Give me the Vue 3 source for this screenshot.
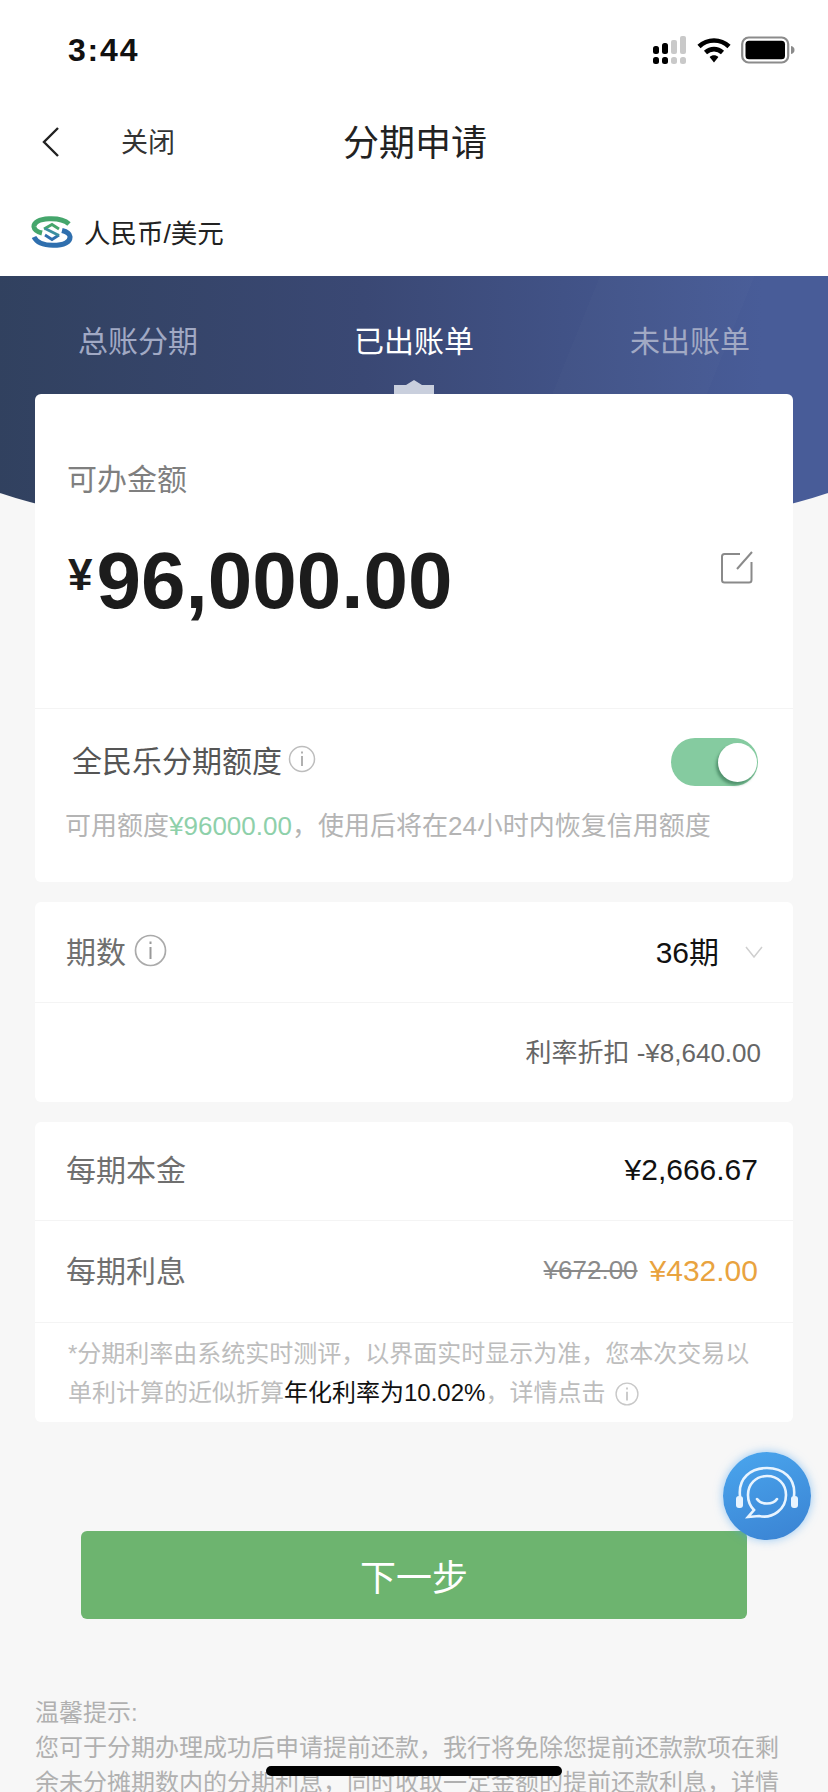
<script setup>
const tabs = [
  { label: '总账分期', active: false },
  { label: '已出账单', active: true },
  { label: '未出账单', active: false },
]
</script>

<template>
  <div class="page">
    <header class="status">
      <span class="time">3:44</span>
      <div class="status-icons">
        <svg width="34" height="28" viewBox="0 0 34 28">
          <g fill="#000">
            <rect x="0" y="10" width="6" height="8" rx="2.5" />
            <rect x="9" y="7" width="6" height="11" rx="2.5" />
            <rect x="0" y="21" width="6" height="7" rx="2.5" />
            <rect x="9" y="21" width="6" height="7" rx="2.5" />
          </g>
          <g fill="#c9c9c9">
            <rect x="18" y="4" width="6" height="14" rx="2" />
            <rect x="27" y="0" width="6" height="18" rx="2" />
            <rect x="18" y="21" width="6" height="7" rx="2.5" />
            <rect x="27" y="21" width="6" height="7" rx="2.5" />
          </g>
        </svg>
        <svg class="wifi" width="34" height="26" viewBox="0 0 34 26">
          <path d="M2 9.5 C10.5 1.5 23.5 1.5 32 9.5" fill="none" stroke="#000" stroke-width="4.6" />
          <path d="M8.5 15.5 C13.5 11 20.5 11 25.5 15.5" fill="none" stroke="#000" stroke-width="4.6" />
          <path d="M12.6 20 C15 17.8 19 17.8 21.4 20 L17 25.5 Z" fill="#000" />
        </svg>
        <svg width="54" height="28" viewBox="0 0 54 28">
          <rect x="1.2" y="1.5" width="46" height="25" rx="6.5" fill="none" stroke="#8b8b8b" stroke-width="2.2" />
          <rect x="4.5" y="4.7" width="39.5" height="18.6" rx="3.5" fill="#000" />
          <path d="M50 10 C52.5 10.5 53.5 12 53.5 14 C53.5 16 52.5 17.5 50 18 Z" fill="#8b8b8b" />
        </svg>
      </div>
    </header>

    <nav class="nav">
      <svg class="back" width="20" height="32" viewBox="0 0 20 32">
        <path d="M17 2 L3 16 L17 30" fill="none" stroke="#222" stroke-width="2.4" />
      </svg>
      <span class="close">关闭</span>
      <h1 class="title">分期申请</h1>
    </nav>

    <div class="currency">
      <svg class="logo" width="42" height="32" viewBox="0 0 42 32">
        <path d="M38 8 C33 3.500 25 2.500 18 2.800 C8 3.200 2.500 6.500 3 11 C3.500 14.500 7 16 11 17" fill="none" stroke="#45a66c" stroke-width="5" />
        <path d="M3 21 C6 27 14 29.300 22 29.300 C33 29.300 39.500 26 39 20.500 C38.600 17 35 15.500 31 14.500" fill="none" stroke="#2f6fae" stroke-width="5" />
        <path d="M13 13 L21 8.500 L28 13" fill="none" stroke="#45a66c" stroke-width="2.800" />
        <path d="M14 19 L21 23.500 L28 19" fill="none" stroke="#2f6fae" stroke-width="2.800" />
        <path d="M14 12.500 L28 19.500" fill="none" stroke="#3b8fa0" stroke-width="2.800" />
      </svg>
      <span class="currency-text">人民币/美元</span>
    </div>

    <section class="hero">
      <div class="tabs">
        <div v-for="tab in tabs" :key="tab.label" class="tab" :class="{ active: tab.active }">
          {{ tab.label }}
          <svg v-if="tab.active" class="pointer" width="40" height="14" viewBox="0 0 40 14">
            <path d="M0 5 L12 5 L20 0 L28 5 L40 5 L40 14 L0 14 Z" fill="#c9cfdd" />
          </svg>
        </div>
      </div>

      <div class="card">
        <div class="amount-block">
          <div class="muted-label">可办金额</div>
          <div class="amount-row">
            <div class="amount"><span class="yen">¥</span>96,000.00</div>
            <svg class="edit" width="34" height="34" viewBox="0 0 34 34">
              <path d="M20 3 L4.500 3 Q2 3 2 5.500 L2 29 Q2 31.500 4.500 31.500 L29 31.500 Q31.500 31.500 31.500 29 L31.500 11" fill="none" stroke="#8a8a8a" stroke-width="2" />
              <path d="M17 18 L32 1" fill="none" stroke="#8a8a8a" stroke-width="2" />
            </svg>
          </div>
        </div>
        <div class="quota-block">
          <div class="quota-row">
            <div class="quota-label">
              <span>全民乐分期额度</span>
              <svg width="28" height="28" viewBox="0 0 28 28">
                <circle cx="14" cy="14" r="12.500" fill="none" stroke="#bdbdbd" stroke-width="1.500" />
                <path d="M14 11 V21 M14 6.500 V8.500" stroke="#a8a8a8" stroke-width="1.800" />
              </svg>
            </div>
            <div class="toggle"><div class="knob"></div></div>
          </div>
          <p class="quota-hint">可用额度<span class="green">¥96000.00</span>，使用后将在24小时内恢复信用额度</p>
        </div>
      </div>
    </section>

    <section class="card panel">
      <div class="row term-row">
        <div class="row-left">
          <span class="row-label">期数</span>
          <svg width="33" height="33" viewBox="0 0 33 33">
            <circle cx="16.500" cy="16.500" r="15" fill="none" stroke="#aaa" stroke-width="1.700" />
            <path d="M16.500 13 V25 M16.500 7.500 V10" stroke="#999" stroke-width="2" />
          </svg>
        </div>
        <div class="row-right">
          <span class="value">36期</span>
          <svg class="chevron" width="18" height="12" viewBox="0 0 18 12">
            <path d="M1 1 L9 11 L17 1" fill="none" stroke="#cfcfcf" stroke-width="1.500" />
          </svg>
        </div>
      </div>
      <div class="row discount-row">利率折扣 -¥8,640.00</div>
    </section>

    <section class="card panel">
      <div class="row money-row">
        <span class="row-label">每期本金</span>
        <span class="value">¥2,666.67</span>
      </div>
      <div class="row money-row tall">
        <span class="row-label">每期利息</span>
        <div class="prices">
          <s class="old-price">¥672.00</s>
          <span class="new-price">¥432.00</span>
        </div>
      </div>
      <div class="note">
        <div class="note-line">*分期利率由系统实时测评，以界面实时显示为准，您本次交易以</div>
        <div class="note-line">单利计算的近似折算<span class="dark">年化利率为10.02%</span>，详情点击
          <svg class="note-info" width="24" height="24" viewBox="0 0 22 22">
            <circle cx="11" cy="11" r="10" fill="none" stroke="#c8c8c8" stroke-width="1.300" />
            <path d="M11 9 V17 M11 5 V6.800" stroke="#c0c0c0" stroke-width="1.500" />
          </svg>
        </div>
      </div>
    </section>

    <button class="next" type="button">下一步</button>

    <section class="tips">
      <div>温馨提示:</div>
      <div>您可于分期办理成功后申请提前还款，我行将免除您提前还款款项在剩余未分摊期数内的分期利息，同时收取一定金额的提前还款利息，详情</div>
    </section>

    <div class="fab">
      <svg width="88" height="88" viewBox="0 0 88 88">
        <g fill="none" stroke="#e8f4ff" stroke-width="2.600" stroke-linecap="round">
          <path d="M17 44 C15 26 28 16 44 16 C60 16 73 26 71 44" />
          <path d="M25 65 L36 64 C50 67 63 57 63 43 C63 32 55 24 44 24 C33 24 25 32 25 43 C25 50 28 55 31 58 Z" />
          <path d="M34 47 C38 53 50 53 54 47" />
        </g>
        <rect x="13" y="44" width="7" height="12" rx="3" fill="#e8f4ff" />
        <rect x="68" y="44" width="7" height="12" rx="3" fill="#e8f4ff" />
      </svg>
    </div>
    <div class="home-indicator"></div>
  </div>
</template>

<style>
html, body { margin: 0; background: #f7f7f7; }
</style>

<style scoped>
.page {
  position: relative;
  width: 828px;
  height: 1792px;
  overflow: hidden;
  background: #f7f7f7;
  font-family: "Liberation Sans", "Noto Sans CJK SC", sans-serif;
  color: #222;
}
.status {
  height: 100px;
  box-sizing: border-box;
  padding: 30px 33px 0 68px;
  display: flex;
  justify-content: space-between;
  align-items: flex-start;
  background: #fff;
}
.time { font-size: 32px; font-weight: 700; line-height: 40px; color: #111; letter-spacing: 1.800px; }
.status-icons { display: flex; align-items: center; gap: 10px; padding-top: 6px; }
.nav {
  position: relative;
  height: 84px;
  background: #fff;
  display: flex;
  align-items: center;
  padding-left: 41px;
}
.back { flex: none; }
.close { margin-left: 60px; padding-bottom: 4px; font-size: 27px; color: #333; }
.title {
  margin: 0 0 0 168px;
  padding-bottom: 4px;
  font-size: 36px;
  font-weight: 400;
  color: #222;
}
.currency {
  height: 92px;
  background: #fff;
  box-sizing: border-box;
  padding: 0 0 0 31px;
  display: flex;
  align-items: center;
  gap: 11px;
  font-size: 26.500px;
  color: #222;
}
.currency-text { padding-top: 2px; }
.logo { flex: none; margin-top: 4px; }
.hero { position: relative; }
.hero::before {
  content: "";
  position: absolute;
  left: -83px;
  top: 0;
  width: 994px;
  height: 267px;
  border-radius: 0 0 497px 497px / 0 0 112px 112px;
  background:
    linear-gradient(112deg, transparent 62%, rgba(255,255,255,.012) 62%, rgba(255,255,255,.012) 76%, transparent 76%),
    linear-gradient(90deg, #31415f 8%, #3a4874 45%, #485c98 85%);
}
.tabs {
  position: relative;
  height: 118px;
  display: grid;
  grid-template-columns: repeat(3, 276px);
}
.tab {
  position: relative;
  padding-top: 44px;
  text-align: center;
  font-size: 30px;
  line-height: 44px;
  color: #a1a9c4;
}
.tab.active { color: #fff; }
.pointer { position: absolute; left: 118px; bottom: 0; }
.card {
  position: relative;
  margin: 0 35px;
  background: #fff;
  border-radius: 6px;
}
.amount-block {
  height: 314px;
  box-sizing: border-box;
  padding: 64px 39px 0 33px;
}
.muted-label { font-size: 30px; line-height: 44px; color: #7f7f7f; margin-left: -1px; }
.amount-row {
  margin-top: 23px;
  display: flex;
  justify-content: space-between;
  align-items: flex-start;
}
.amount {
  font-size: 80px;
  font-weight: 700;
  line-height: 100px;
  color: #1c1c1c;
  letter-spacing: 0;
}
.yen { font-size: 44px; vertical-align: 18px; margin-right: 4px; }
.edit { margin-top: 26px; }
.quota-block {
  height: 174px;
  box-sizing: border-box;
  border-top: 1px solid #f4f4f4;
  padding: 28px 35px 0 32px;
}
.quota-row { display: flex; justify-content: space-between; align-items: center; }
.quota-label {
  display: flex;
  align-items: center;
  gap: 6px;
  padding: 0 0 6px 5px;
  font-size: 30px;
  color: #555;
}
.toggle {
  width: 87px;
  height: 48px;
  border-radius: 24px;
  background: #85cba0;
  display: flex;
  justify-content: flex-end;
  align-items: center;
}
.knob {
  width: 39px;
  height: 39px;
  margin-right: 1px;
  border-radius: 50%;
  background: #fff;
  box-shadow: -2px 3px 3px rgba(40, 100, 70, .55);
}
.quota-hint {
  margin: 21px 0 0 -2px;
  font-size: 26px;
  line-height: 36px;
  color: #b4b4b4;
  white-space: nowrap;
}
.green { color: #8ed0aa; }
.panel { margin-top: 20px; }
.row {
  display: flex;
  align-items: center;
  justify-content: space-between;
  padding: 0 35px 2px 31px;
}
.row-label { margin-bottom: 4px; font-size: 30px; color: #6f6f6f; }
.row-left .row-label { margin-bottom: 0; }
.term-row { box-sizing: border-box; height: 101px; border-bottom: 1px solid #f4f4f4; padding-right: 30px; padding-bottom: 4px; }
.row-left { display: flex; align-items: center; gap: 8px; }
.row-right { display: flex; align-items: center; gap: 26px; }
.chevron { margin-top: 4px; }
.value { font-size: 30px; color: #111; }
.discount-row {
  height: 99px;
  box-sizing: border-box;
  justify-content: flex-end;
  padding-right: 32px;
  padding-bottom: 4px;
  font-size: 26px;
  color: #666;
}
.money-row { height: 99px; box-sizing: border-box; border-bottom: 1px solid #f4f4f4; }
.money-row.tall { height: 102px; }
.prices { display: flex; align-items: center; gap: 12px; }
.old-price { font-size: 26px; color: #8a8a8a; }
.new-price { font-size: 30px; color: #e9a33f; }
.note { padding: 11px 0 10px 33px; font-size: 24px; line-height: 39px; color: #bdbdbd; white-space: nowrap; }
.note-line { display: block; }
.dark { color: #111; }
.note-info { vertical-align: -5px; margin-left: 3px; }
.next {
  display: block;
  width: 666px;
  height: 88px;
  margin: 109px 0 0 81px;
  border: 0;
  border-radius: 6px;
  background: #6db46f;
  color: #fff;
  font-family: inherit;
  font-size: 36px;
}
.tips {
  margin-top: 76px;
  padding: 0 40px 0 35px;
  font-size: 24px;
  line-height: 35px;
  color: #b0b0b0;
}
.fab {
  position: absolute;
  left: 723px;
  top: 1452px;
  width: 88px;
  height: 88px;
  border-radius: 50%;
  background: linear-gradient(160deg, #4aa6ee, #3a82d2);
  box-shadow: 0 0 10px rgba(70, 160, 240, .55);
}
.home-indicator {
  position: absolute;
  left: 266px;
  top: 1766px;
  width: 296px;
  height: 10px;
  border-radius: 5px;
  background: #000;
}
</style>
